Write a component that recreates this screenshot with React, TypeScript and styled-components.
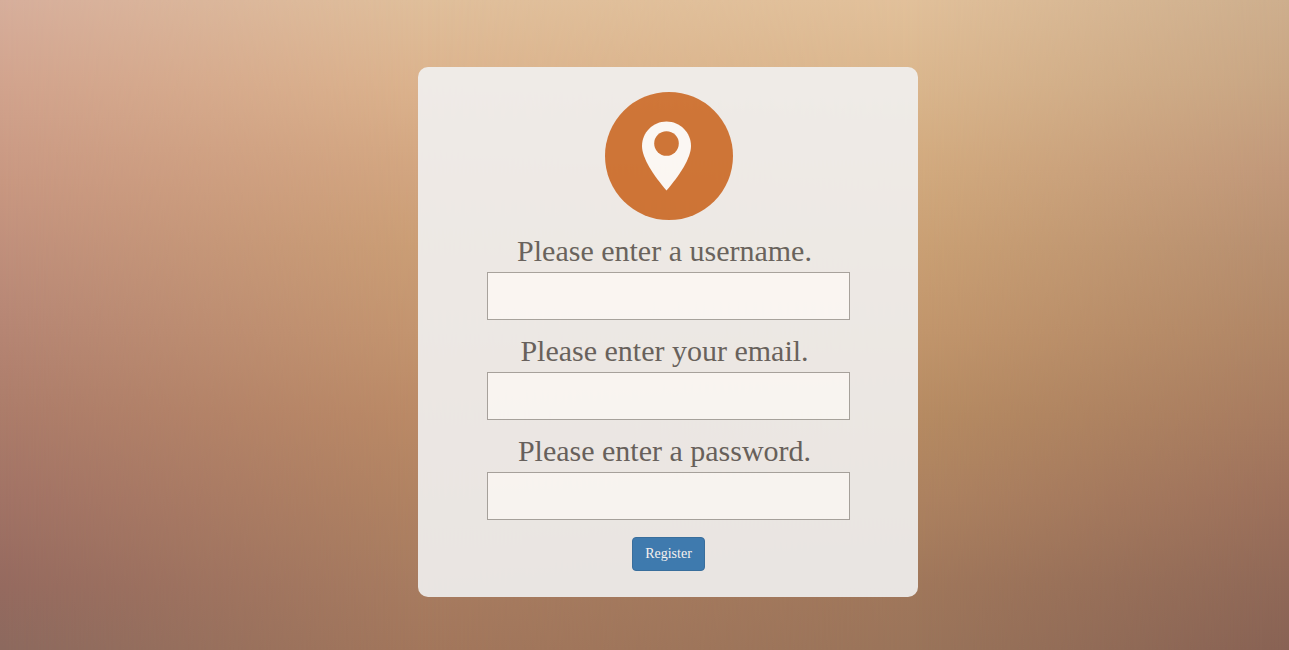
import React from "react";
import styled, { createGlobalStyle } from "styled-components";

const GlobalStyle = createGlobalStyle`
  *, *::before, *::after { box-sizing: border-box; }
  html, body { margin: 0; padding: 0; }
  body {
    font-family: "Liberation Serif", "Times New Roman", serif;
    color: #5f5d5b;
  }
`;

/* Sunset backdrop: four vertical washes that fade into each other from left to right. */
const Backdrop = styled.div`
  position: fixed;
  inset: 0;
  z-index: -1;
`;

const Wash = styled.div<{ $colors: string; $fade?: string }>`
  position: absolute;
  inset: 0;
  background: linear-gradient(to bottom, ${(p) => p.$colors});
  ${(p) => p.$fade && `mask-image: linear-gradient(to right, ${p.$fade});`}
`;

const Page = styled.main`
  display: flex;
  justify-content: center;
  min-height: 100vh;
  padding: 67px 0 53px 47px;
`;

const Card = styled.form`
  display: flex;
  flex-direction: column;
  align-items: center;
  align-self: flex-start;
  gap: 14px;
  width: 100%;
  max-width: 500px;
  padding: 25px 24px 26px 25px;
  border-radius: 10px;
  background: #f1f1f1;
  opacity: 0.9;
`;

const Logo = styled.svg`
  display: block;
  width: 128px;
  height: 128px;
`;

const Field = styled.div`
  display: flex;
  flex-direction: column;
  gap: 4px;
  width: 363px;
  max-width: 100%;
`;

const Label = styled.label`
  padding-right: 8px;
  font-size: 30px;
  line-height: 34px;
  text-align: center;
`;

const Input = styled.input`
  width: 100%;
  height: 48px;
  padding: 6px 12px;
  border: 1px solid #a5a3a1;
  border-radius: 0;
  outline: none;
  background: #fff;
  color: inherit;
  font: inherit;
  font-size: 30px;
`;

const RegisterButton = styled.button`
  margin-top: 3px;
  padding: 6px 12px;
  border: 1px solid #2e6da4;
  border-radius: 4px;
  background: #337ab7;
  color: #fff;
  font: inherit;
  font-size: 14px;
  line-height: 20px;
  cursor: pointer;
`;

const fields = [
  { id: "username", type: "text", label: "Please enter a username." },
  { id: "email", type: "email", label: "Please enter your email." },
  { id: "password", type: "password", label: "Please enter a password." },
];

export default function App() {
  return (
    <>
      <GlobalStyle />
      <Backdrop aria-hidden="true">
        <Wash $colors="#e0bf9b, #dcb38d 13%, #d3a680 26%, #cb9e75 38%, #c4956f 51%, #bb8a66 64%, #b18362 77%, #a87c60 90%, #a3775c" />
        <Wash
          $colors="#d6ae9b, #d1a38d 13%, #c89781 28%, #b88876 47%, #ac7c6a 63%, #a17265 77%, #956a5f 90%, #8c695e"
          $fade="#000, transparent 33%"
        />
        <Wash
          $colors="#e1c09a, #dab68d 13%, #d2aa7e 26%, #caa074 38%, #c2966c 51%, #b68b62 64%, #ad8260 77%, #a0775b 90%, #9a745a"
          $fade="transparent 33%, #000 71%"
        />
        <Wash
          $colors="#cdae8d, #c8a583 13%, #c1987a 26%, #b78f70 38%, #b08666 51%, #a77b60 64%, #9c705b 77%, #8f6857 90%, #886254"
          $fade="transparent 71%, #000"
        />
      </Backdrop>
      <Page>
        <Card onSubmit={(e: React.FormEvent) => e.preventDefault()}>
          <Logo viewBox="0 0 128 128" aria-hidden="true">
            <circle cx="64" cy="64" r="64" fill="#ce6f2f" />
            <path
              d="M61.5 29.5C48 29.5 37 40.5 37 54c0 12 11.500 29.500 24.500 44.500C74.500 83.500 86 66 86 54c0-13.500-11-24.500-24.500-24.500z"
              fill="#fff"
            />
            <circle cx="61.500" cy="51.500" r="12.300" fill="#ce6f2f" />
          </Logo>
          {fields.map((f) => (
            <Field key={f.id}>
              <Label htmlFor={f.id}>{f.label}</Label>
              <Input id={f.id} name={f.id} type={f.type} />
            </Field>
          ))}
          <RegisterButton type="submit">Register</RegisterButton>
        </Card>
      </Page>
    </>
  );
}
